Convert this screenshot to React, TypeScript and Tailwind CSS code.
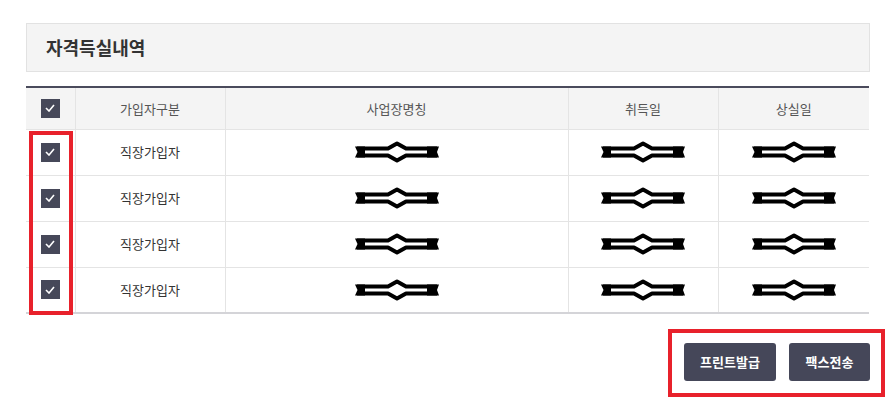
import React from "react";

// Black scribble used to mask personal data in the screenshot.
function Redact() {
  return (
    <svg width="86" height="22" viewBox="0 0 86 22" className="mx-auto block">
      <path d="M3 7.5 L34 7.5 L43 2.5 L52 7.5 L83 7.5" stroke="#000" strokeWidth="4" fill="none" strokeLinejoin="round" />
      <path d="M3 14.5 L34 14.5 L43 19.5 L52 14.5 L83 14.5" stroke="#000" strokeWidth="4" fill="none" strokeLinejoin="round" />
      <path d="M1 5.5 L11 5.5 L11 16.5 L1 16.5 L3.5 11 Z" fill="#000" />
      <path d="M73 5.5 L85 5.5 L83 11 L85 16.5 L73 16.5 Z" fill="#000" />
    </svg>
  );
}

function Check() {
  return (
    <span className="mx-auto flex h-[19px] w-[19px] items-center justify-center bg-[#464859]">
      <svg width="10" height="8" viewBox="0 0 10 8">
        <path d="M1 4 L4 7 L9 1" stroke="#fff" strokeWidth="1.6" fill="none" />
      </svg>
    </span>
  );
}

const rows = [0, 1, 2, 3];

export default function App() {
  return (
    <div
      className="relative h-[410px] w-[890px] bg-white pl-[26px] pt-[23px]"
      style={{ fontFamily: '"Noto Sans CJK KR", "Noto Sans", sans-serif' }}
    >
      <div className="flex h-[49px] w-[844px] items-center border border-[#e2e2e2] bg-[#f4f4f4] pl-[19px]">
        <h2 className="text-[18px] font-bold text-[#333]">자격득실내역</h2>
      </div>

      <table className="mt-[14px] w-[843px] table-fixed border-collapse border-t-2 border-[#4a4b5c] text-[13px]">
        <colgroup>
          <col className="w-[49px]" />
          <col className="w-[150px]" />
          <col className="w-[343px]" />
          <col className="w-[150px]" />
          <col className="w-[151px]" />
        </colgroup>
        <thead>
          <tr className="h-[42px] bg-[#f4f4f4] text-[#555]">
            <th className="font-normal">
              <Check />
            </th>
            <th className="border-l border-[#e4e4e4] font-normal">가입자구분</th>
            <th className="border-l border-[#e4e4e4] font-normal">사업장명칭</th>
            <th className="border-l border-[#e4e4e4] font-normal">취득일</th>
            <th className="border-l border-[#e4e4e4] font-normal">상실일</th>
          </tr>
        </thead>
        <tbody className="text-[#333]">
          {rows.map((r) => (
            <tr
              key={r}
              className={`h-[46px] border-t border-[#e4e4e4] ${r === 3 ? "border-b-2 border-b-[#d4d4d8]" : ""}`}
            >
              <td>
                <Check />
              </td>
              <td className="border-l border-[#e4e4e4] text-center">직장가입자</td>
              <td className="border-l border-[#e4e4e4]">
                <Redact />
              </td>
              <td className="border-l border-[#e4e4e4]">
                <Redact />
              </td>
              <td className="border-l border-[#e4e4e4]">
                <Redact />
              </td>
            </tr>
          ))}
        </tbody>
      </table>

      <div className="mt-[29px] flex w-[844px] justify-end gap-[13px]">
        <button className="h-[38px] w-[92px] rounded-[3px] bg-[#454759] text-[13px] font-bold text-white">
          프린트발급
        </button>
        <button className="h-[38px] w-[81px] rounded-[3px] bg-[#454759] text-[13px] font-bold text-white">
          팩스전송
        </button>
      </div>

      {/* red annotation boxes */}
      <div className="pointer-events-none absolute left-[29px] top-[131px] h-[184px] w-[44px] border-4 border-[#e8212b]" />
      <div className="pointer-events-none absolute left-[668px] top-[329px] h-[68px] w-[217px] border-4 border-[#e8212b]" />
    </div>
  );
}
